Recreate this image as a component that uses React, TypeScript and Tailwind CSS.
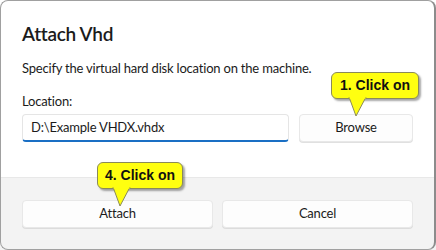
import React from "react";

function Callout({ text, className, tailLeft }: { text: string; className: string; tailLeft: number }) {
  return (
    <div className={`absolute ${className}`}>
      <div className="relative">
        <div className="h-[27px] rounded-[6px] border border-[#8a8a5a] bg-[#ffff10] shadow-[2px_2px_2px_rgba(0,0,0,0.35)] flex items-center justify-center text-[14px] font-bold text-[#111] [font-family:'Liberation_Sans',Arial,sans-serif]">
          {text}
        </div>
        <svg
          className="absolute"
          style={{ left: tailLeft, top: 25 }}
          width="22"
          height="20"
          viewBox="0 0 22 20"
        >
          <path d="M1 0 L8 19 L18 0" fill="#ffff10" stroke="#8a8a5a" strokeWidth="1" />
          <rect x="1.5" y="0" width="16" height="1.6" fill="#ffff10" />
        </svg>
      </div>
    </div>
  );
}

export default function App() {
  return (
    <div className="relative w-[436px] h-[250px] bg-white overflow-hidden [font-family:'Lato','Open_Sans',sans-serif]">
      <div className="absolute inset-0 rounded-[8px] border border-[#a0a0a0] border-r-2 border-r-[#8c8c8c] pointer-events-none z-10" />
      <div className="flex flex-col h-full">
        <div className="flex flex-col px-[22px] pt-[20px] h-[177px]">
          <div className="text-[19px] font-semibold text-[#1b1b1b] leading-[28px] tracking-[-0.3px]">Attach Vhd</div>
          <div className="mt-[11px] text-[13px] text-[#1b1b1b] leading-[18px] tracking-[-0.2px]">
            Specify the virtual hard disk location on the machine.
          </div>
          <div className="mt-[15px] text-[13px] text-[#1b1b1b] leading-[18px] tracking-[-0.2px]">Location:</div>
          <div className="mt-[4px] flex gap-[10px]">
            <div className="w-[267px] h-[28px] rounded-[4px] border border-[#e5e5e5] border-b-2 border-b-[#1a6fc4] flex items-center px-[8px] text-[13px] text-[#1b1b1b] tracking-[-0.2px]">
              D:\Example VHDX.vhdx
            </div>
            <div className="w-[114px] h-[28px] rounded-[4px] border border-[#e8e8e8] bg-[#fdfdfd] shadow-[0_1px_0_#e0e0e0] flex items-center justify-center text-[13px] text-[#1b1b1b] tracking-[-0.2px]">
              Browse
            </div>
          </div>
        </div>
        <div className="flex-1 bg-[#f3f3f3] border-t border-[#e8e8e8] px-[22px] pt-[22px] flex gap-[9px]">
          <div className="w-[191px] h-[28px] rounded-[4px] border border-[#e8e8e8] bg-[#fdfdfd] shadow-[0_1px_0_#dcdcdc] flex items-center justify-center text-[13px] text-[#1b1b1b] tracking-[-0.2px]">
            Attach
          </div>
          <div className="w-[191px] h-[28px] rounded-[4px] border border-[#e8e8e8] bg-[#fdfdfd] shadow-[0_1px_0_#dcdcdc] flex items-center justify-center text-[13px] text-[#1b1b1b] tracking-[-0.2px]">
            Cancel
          </div>
        </div>
      </div>
      <Callout text="1. Click on" className="left-[331px] top-[72px] w-[88px]" tailLeft={17} />
      <Callout text="4. Click on" className="left-[97px] top-[162px] w-[86px]" tailLeft={15} />
    </div>
  );
}
